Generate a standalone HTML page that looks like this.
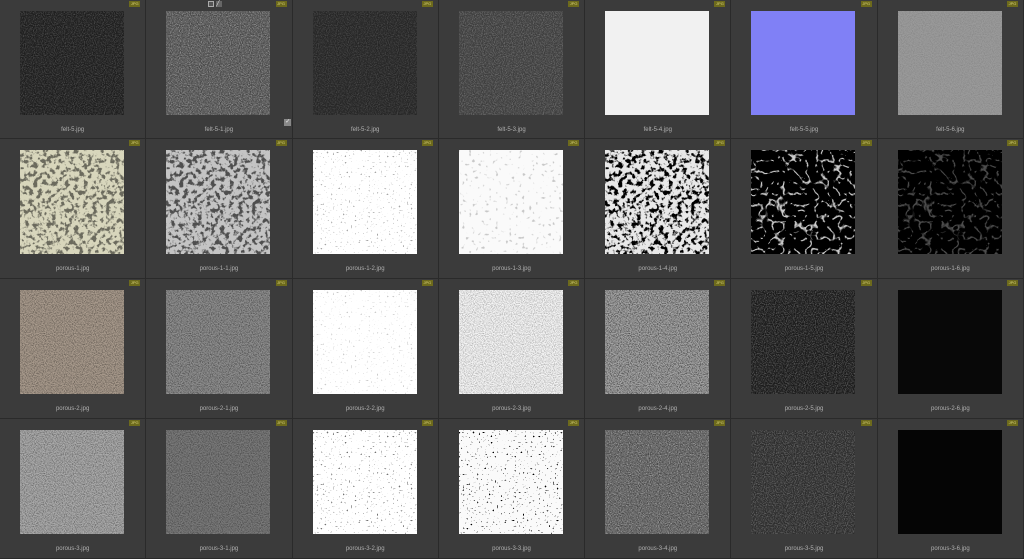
<!DOCTYPE html>
<html><head><meta charset="utf-8"><style>
*{margin:0;padding:0;box-sizing:border-box}
body{width:1024px;height:557px;overflow:hidden;background:#3a3a3a;font-family:"Liberation Sans",sans-serif}
.g{display:grid;grid-template-columns:repeat(7,1fr);grid-template-rows:139px 140px 140px 140px;width:1024px}
.c{position:relative;border-right:1px solid #2a2a2a;border-bottom:1px solid #2a2a2a;background:#3b3b3b}
.c svg.i{position:absolute;left:20px;top:11px;width:104px;height:104px}
.b{position:absolute;right:5px;top:1px;width:11px;height:6px;background:#6d6a1c;color:#d8d27a;font-size:4px;line-height:6px;text-align:center}
.l{position:absolute;left:0;right:0;top:127px;text-align:center;color:#b0b0b0;font-size:6px}
</style></head><body>
<svg width="0" height="0" style="position:absolute">
<defs>
<filter id="w" x="0" y="0" width="100%" height="100%"><feTurbulence type="fractalNoise" baseFrequency="0.9" numOctaves="2" seed="3"/><feColorMatrix values="0 0 0 0 1 0 0 0 0 1 0 0 0 0 1 3 0 0 0 -1.2"/></filter>
<filter id="k" x="0" y="0" width="100%" height="100%"><feTurbulence type="fractalNoise" baseFrequency="0.9" numOctaves="2" seed="7"/><feColorMatrix values="0 0 0 0 0 0 0 0 0 0 0 0 0 0 0 3 0 0 0 -1.2"/></filter>
<filter id="pw" x="0" y="0" width="100%" height="100%"><feTurbulence type="turbulence" baseFrequency="0.09" numOctaves="2" seed="5"/><feColorMatrix values="0 0 0 0 1 0 0 0 0 1 0 0 0 0 1 -10 0 0 0 1.5"/></filter>
<filter id="pk" x="0" y="0" width="100%" height="100%"><feTurbulence type="fractalNoise" baseFrequency="0.22" numOctaves="3" seed="9"/><feColorMatrix values="0 0 0 0 0 0 0 0 0 0 0 0 0 0 0 7 0 0 0 -3.5"/></filter>
<filter id="d" x="0" y="0" width="100%" height="100%"><feTurbulence type="fractalNoise" baseFrequency="0.5" numOctaves="1" seed="2"/><feColorMatrix values="0 0 0 0 0 0 0 0 0 0 0 0 0 0 0 12 0 0 0 -8"/></filter>
<filter id="dg" x="0" y="0" width="100%" height="100%"><feTurbulence type="fractalNoise" baseFrequency="0.3" numOctaves="1" seed="4"/><feColorMatrix values="0 0 0 0 0.5 0 0 0 0 0.5 0 0 0 0 0.5 10 0 0 0 -6.4"/></filter>
</defs></svg>
<div class="g">
<div class="c"><span class="b">JPG</span><svg class="i"><rect width="104" height="104" fill="#1e1e1e"/><rect width="104" height="104" filter="url(#w)" opacity=".18"/></svg><div class="l">felt-5.jpg</div></div>
<div class="c"><span class="b">JPG</span><div style="position:absolute;left:62px;top:1px;width:6px;height:6px;border:1px solid #aaa;background:#555"></div><div style="position:absolute;left:70px;top:1px;width:6px;height:6px;background:#666;color:#ddd;font-size:6px;line-height:6px">╱</div><svg class="i"><rect width="104" height="104" fill="#5a5a5a"/><rect width="104" height="104" filter="url(#w)" opacity=".35"/><rect width="104" height="104" filter="url(#k)" opacity=".3"/></svg><div style="position:absolute;left:138px;top:119px;width:7px;height:7px;background:#888;color:#eee;font-size:6px;line-height:7px;text-align:center">✓</div><div class="l">felt-5-1.jpg</div></div>
<div class="c"><span class="b">JPG</span><svg class="i"><rect width="104" height="104" fill="#262626"/><rect width="104" height="104" filter="url(#w)" opacity=".14"/></svg><div class="l">felt-5-2.jpg</div></div>
<div class="c"><span class="b">JPG</span><svg class="i"><rect width="104" height="104" fill="#3e3e3e"/><rect width="104" height="104" filter="url(#w)" opacity=".22"/></svg><div class="l">felt-5-3.jpg</div></div>
<div class="c"><span class="b">JPG</span><svg class="i"><rect width="104" height="104" fill="#f1f1f1"/></svg><div class="l">felt-5-4.jpg</div></div>
<div class="c"><span class="b">JPG</span><svg class="i"><rect width="104" height="104" fill="#8080f6"/></svg><div class="l">felt-5-5.jpg</div></div>
<div class="c"><span class="b">JPG</span><svg class="i"><rect width="104" height="104" fill="#9a9a9a"/><rect width="104" height="104" filter="url(#k)" opacity=".1"/></svg><div class="l">felt-5-6.jpg</div></div>
<div class="c"><span class="b">JPG</span><svg class="i"><rect width="104" height="104" fill="#d8d6bc"/><rect width="104" height="104" filter="url(#pk)" opacity=".5"/></svg><div class="l">porous-1.jpg</div></div>
<div class="c"><span class="b">JPG</span><svg class="i"><rect width="104" height="104" fill="#c4c4c4"/><rect width="104" height="104" filter="url(#pk)" opacity=".6"/></svg><div class="l">porous-1-1.jpg</div></div>
<div class="c"><span class="b">JPG</span><svg class="i"><rect width="104" height="104" fill="#fff"/><rect width="104" height="104" filter="url(#d)" opacity=".35"/></svg><div class="l">porous-1-2.jpg</div></div>
<div class="c"><span class="b">JPG</span><svg class="i"><rect width="104" height="104" fill="#fafafa"/><rect width="104" height="104" filter="url(#dg)" opacity=".8"/></svg><div class="l">porous-1-3.jpg</div></div>
<div class="c"><span class="b">JPG</span><svg class="i"><rect width="104" height="104" fill="#e8e8e8"/><rect width="104" height="104" filter="url(#pk)"/></svg><div class="l">porous-1-4.jpg</div></div>
<div class="c"><span class="b">JPG</span><svg class="i"><rect width="104" height="104" fill="#000"/><rect width="104" height="104" filter="url(#pw)" opacity=".8"/></svg><div class="l">porous-1-5.jpg</div></div>
<div class="c"><span class="b">JPG</span><svg class="i"><rect width="104" height="104" fill="#000"/><rect width="104" height="104" filter="url(#pw)" opacity=".3"/></svg><div class="l">porous-1-6.jpg</div></div>
<div class="c"><span class="b">JPG</span><svg class="i"><rect width="104" height="104" fill="#a89a8c"/><rect width="104" height="104" filter="url(#k)" opacity=".35"/></svg><div class="l">porous-2.jpg</div></div>
<div class="c"><span class="b">JPG</span><svg class="i"><rect width="104" height="104" fill="#8e8e8e"/><rect width="104" height="104" filter="url(#k)" opacity=".4"/></svg><div class="l">porous-2-1.jpg</div></div>
<div class="c"><span class="b">JPG</span><svg class="i"><rect width="104" height="104" fill="#fff"/><rect width="104" height="104" filter="url(#d)" opacity=".2"/></svg><div class="l">porous-2-2.jpg</div></div>
<div class="c"><span class="b">JPG</span><svg class="i"><rect width="104" height="104" fill="#f4f4f4"/><rect width="104" height="104" filter="url(#k)" opacity=".25"/></svg><div class="l">porous-2-3.jpg</div></div>
<div class="c"><span class="b">JPG</span><svg class="i"><rect width="104" height="104" fill="#a4a4a4"/><rect width="104" height="104" filter="url(#k)" opacity=".5"/></svg><div class="l">porous-2-4.jpg</div></div>
<div class="c"><span class="b">JPG</span><svg class="i"><rect width="104" height="104" fill="#1a1a1a"/><rect width="104" height="104" filter="url(#w)" opacity=".25"/></svg><div class="l">porous-2-5.jpg</div></div>
<div class="c"><span class="b">JPG</span><svg class="i"><rect width="104" height="104" fill="#080808"/></svg><div class="l">porous-2-6.jpg</div></div>
<div class="c"><span class="b">JPG</span><svg class="i"><rect width="104" height="104" fill="#aaaaaa"/><rect width="104" height="104" filter="url(#k)" opacity=".35"/></svg><div class="l">porous-3.jpg</div></div>
<div class="c"><span class="b">JPG</span><svg class="i"><rect width="104" height="104" fill="#7a7a7a"/><rect width="104" height="104" filter="url(#k)" opacity=".35"/></svg><div class="l">porous-3-1.jpg</div></div>
<div class="c"><span class="b">JPG</span><svg class="i"><rect width="104" height="104" fill="#fff"/><rect width="104" height="104" filter="url(#d)" opacity=".55"/></svg><div class="l">porous-3-2.jpg</div></div>
<div class="c"><span class="b">JPG</span><svg class="i"><rect width="104" height="104" fill="#fafafa"/><rect width="104" height="104" filter="url(#d)"/></svg><div class="l">porous-3-3.jpg</div></div>
<div class="c"><span class="b">JPG</span><svg class="i"><rect width="104" height="104" fill="#6a6a6a"/><rect width="104" height="104" filter="url(#w)" opacity=".35"/><rect width="104" height="104" filter="url(#k)" opacity=".4"/></svg><div class="l">porous-3-4.jpg</div></div>
<div class="c"><span class="b">JPG</span><svg class="i"><rect width="104" height="104" fill="#2c2c2c"/><rect width="104" height="104" filter="url(#w)" opacity=".25"/></svg><div class="l">porous-3-5.jpg</div></div>
<div class="c"><span class="b">JPG</span><svg class="i"><rect width="104" height="104" fill="#050505"/></svg><div class="l">porous-3-6.jpg</div></div>
</div>
</body></html>
